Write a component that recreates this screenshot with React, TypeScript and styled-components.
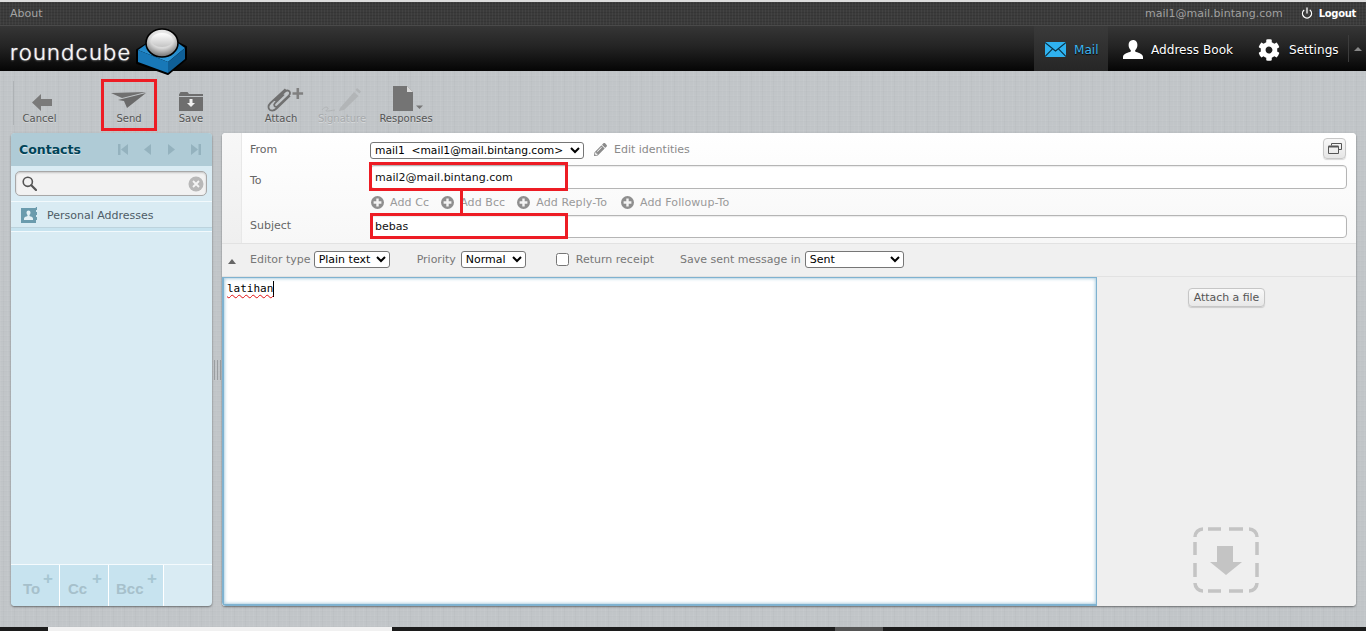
import styled, { createGlobalStyle } from "styled-components";
import { FaCog, FaPencilAlt } from "react-icons/fa";
import { Power } from "lucide-react";

const GlobalStyle = createGlobalStyle`
  html, body { margin: 0; padding: 0; height: 100%; overflow: hidden; }
  body { font-family: "DejaVu Sans", Verdana, sans-serif; font-size: 11px; color: #333; }
  * { box-sizing: border-box; }
`;

const linen = `
  repeating-linear-gradient(90deg, rgba(255,255,255,.05) 0 1px, transparent 1px 3px, rgba(0,0,0,.02) 3px 4px, transparent 4px 7px, rgba(255,255,255,.03) 7px 8px, transparent 8px 11px),
  repeating-linear-gradient(0deg, rgba(255,255,255,.03) 0 1px, transparent 1px 4px, rgba(0,0,0,.012) 4px 5px)
`;

const Page = styled.div`
  width: 1366px; height: 631px; display: flex; flex-direction: column; overflow: hidden;
  background-color: #c1c5c8; background-image: ${linen};
  border-top: 2px solid #dcdcdc;
`;

/* top line */
const TopLine = styled.div`
  height: 23px; flex: none; display: flex; align-items: center; justify-content: space-between;
  padding: 0 10px;
  background-color: #3b3b3b;
  background-image: repeating-linear-gradient(90deg, rgba(255,255,255,.04) 0 1px, transparent 1px 3px),
    repeating-linear-gradient(0deg, rgba(0,0,0,.1) 0 1px, transparent 1px 3px);
`;
const About = styled.span` color: #a3a3a3; font-size: 11px; `;
const UserBox = styled.div` display: flex; align-items: center; `;
const UserMail = styled.span` color: #a0a0a0; font-size: 11px; margin-right: 18px; `;
const Logout = styled.span`
  display: flex; align-items: center; gap: 6px;
  color: #fff; font-size: 10px; font-weight: 700; letter-spacing: -0.3px;
  svg { margin-top: -1px; }
`;

/* logo + tasks */
const NavBar = styled.div`
  height: 46px; flex: none; display: flex; justify-content: space-between; position: relative; z-index: 2;
  background: linear-gradient(180deg, #363636 0%, #242424 45%, #050505 100%);
  border-top: 1px solid #4a4a4a;
`;
const Logo = styled.div` display: flex; align-items: flex-start; padding-left: 10px; `;
const LogoText = styled.span`
  width: 121px; font-family: Inter, Lato, sans-serif; font-weight: 300; font-size: 22px; line-height: 30px;
  letter-spacing: 1.15px; color: #f6f6f6; margin-top: 11px; white-space: nowrap;
  text-shadow: 0 0 1px rgba(255,255,255,.7), 0 1px 2px rgba(255,255,255,.3);
`;
const LogoCube = styled.svg` width: 52px; height: 48px; margin: 2px 0 0 5px; flex: none; overflow: visible; `;
const Tasks = styled.nav` display: flex; align-items: stretch; `;
const Task = styled.a<{ $active?: boolean; $w: number; $gap: number; $pl: number }>`
  width: ${(p) => p.$w}px; display: flex; align-items: center; gap: ${(p) => p.$gap}px;
  padding: 2px 0 0 ${(p) => p.$pl}px;
  font-size: 12.1px; text-shadow: 0 1px 1px #000;
  color: ${(p) => (p.$active ? "#3cb4ee" : "#fff")};
  background: ${(p) => (p.$active ? "linear-gradient(180deg,#3a3a3a,#262626)" : "transparent")};
`;
const TaskToggle = styled.div`
  width: 18px; display: flex; align-items: center; justify-content: center; position: relative;
  &::before { content: ""; position: absolute; left: 0; top: 9px; bottom: 9px; width: 1px; background: #3c3c3c; }
  &::after { content: ""; border: 4px solid transparent; border-top: 0; border-bottom: 4px solid #888; margin-left: 1px; }
`;

/* toolbar */
const Toolbar = styled.div` height: 61px; flex: none; display: flex; padding: 10px 0 0 13px; position: relative; `;
const ToolButton = styled.a<{ $ml?: number; $off?: boolean; $sep?: boolean }>`
  width: 52px; height: 44px; margin-left: ${(p) => p.$ml ?? 0}px; flex: none;
  display: flex; flex-direction: column; align-items: center; justify-content: flex-end;
  font-size: 10px; line-height: 12px; white-space: nowrap;
  color: ${(p) => (p.$off ? "#a8abad" : "#555")};
  text-shadow: 0 1px 0 rgba(255,255,255,.35);
  border-left: ${(p) => (p.$sep ? "1px solid #aeb2b5" : "0")};
  svg { flex: none; margin-bottom: 2px; overflow: visible; }
`;

/* content */
const Content = styled.div`
  flex: 1; min-height: 0; margin: 1px 10px 21px 11px; display: flex; position: relative;
`;

const Sidebar = styled.aside`
  width: 201px; flex: none; display: flex; flex-direction: column; overflow: hidden;
  border-radius: 4px; background: #d9ebf3; box-shadow: 0 1px 2px rgba(0,0,0,.45);
`;
const SideHead = styled.div`
  height: 33px; flex: none; display: flex; align-items: center; justify-content: space-between; padding: 0 11px 0 8px;
  background: #afcbd6;
`;
const SideTitle = styled.h2`
  margin: 0; font-size: 12.5px; font-weight: 700; color: #004458; text-shadow: 0 1px 1px rgba(255,255,255,.6);
`;
const Pager = styled.div` display: flex; align-items: center; gap: 13px; svg { display: block; } `;
const SearchRow = styled.div` height: 35px; flex: none; padding: 5px 5px 0 4px; `;
const SearchBox = styled.div`
  height: 25px; display: flex; align-items: center; justify-content: space-between; padding: 0 2px 0 6px;
  background: #f2f2f2; border: 1px solid #a8a8a8; border-radius: 5px; box-shadow: inset 0 1px 2px rgba(0,0,0,.18);
`;
const GroupRow = styled.div`
  height: 26px; flex: none; display: flex; align-items: center; gap: 10px; padding: 2px 0 0 10px;
  font-size: 11px; color: #4e5c66; border-top: 1px solid #f2f9fc;
`;
const GroupRowEnd = styled.div`
  height: 5px; flex: none; background: #c7e3ef; border-top: 1px solid #bcd3dd; border-bottom: 1px solid #f2f9fc;
`;
const SideFill = styled.div` flex: 1; `;
const AddBar = styled.div` height: 42px; flex: none; display: flex; border-top: 1px solid #f4fafd; `;
const AddButton = styled.a<{ $w: number; $pl: number }>`
  width: ${(p) => p.$w}px; position: relative; display: flex; align-items: center; padding: 6px 0 0 ${(p) => p.$pl}px;
  background: #c7e3ef; border-right: 1px solid #fff;
  font-family: "Liberation Sans", Arial, sans-serif; font-weight: 700; font-size: 15px; color: #a6c0cb;
  &::after { content: "+"; position: absolute; top: 5px; right: 6px; font-size: 17px; line-height: 18px; color: #a6c6d2; }
`;

const Splitter = styled.div`
  width: 10px; flex: none; display: flex; align-items: center; justify-content: center;
  &::after { content: ""; width: 5px; height: 20px; border-left: 1px solid #9a9ea1; border-right: 1px solid #9a9ea1; background: linear-gradient(90deg, transparent 2px, #9a9ea1 2px, #9a9ea1 3px, transparent 3px); }
`;

const Main = styled.main`
  flex: 1; min-width: 0; display: flex; flex-direction: column; overflow: hidden;
  border-radius: 4px; background: #fff; box-shadow: 0 1px 2px rgba(0,0,0,.45);
`;
const Headers = styled.div` height: 110px; flex: none; display: flex; background: linear-gradient(180deg, #fff, #f7f7f7); `;
const HeaderStrip = styled.div` width: 20px; flex: none; background: linear-gradient(180deg, #f7f7f7, #efefef); border-right: 1px solid #e8e8e8; `;
const HeaderGrid = styled.div`
  flex: 1; display: grid; grid-template-columns: 120px 1fr 9px; padding-left: 8px;
  grid-template-rows: 30px 28px 22px 26px; align-items: center;
`;
const FieldLabel = styled.label<{ $mt: number }>` color: #666; font-size: 11px; margin-top: ${(p) => p.$mt}px; `;
const FromCell = styled.div` display: flex; align-items: center; justify-content: space-between; padding-top: 4px; `;
const FromLeft = styled.div` display: flex; align-items: center; gap: 10px; `;
const EditLink = styled.a`
  display: flex; align-items: center; gap: 7px; color: #8a8a8a; font-size: 11px; margin-top: -2px;
`;
const NativeSelect = styled.select<{ $w: number }>`
  width: ${(p) => p.$w}px; height: 17px; padding: 0; background: #fff; color: #000;
  border: 1px solid #767676; border-radius: 3px; font-family: inherit; font-size: 11px;
`;
const FromSelect = styled(NativeSelect)` font-size: 10.7px; `;
const ToggleHeaders = styled.a`
  width: 23px; height: 21px; margin-right: 1px; margin-top: -4px; display: flex; align-items: center; justify-content: center;
  background: linear-gradient(180deg, #f8f8f8, #e6e6e6); border: 1px solid #c8c8c8; border-radius: 4px;
  box-shadow: 0 1px 1px rgba(0,0,0,.15);
`;
const TextField = styled.input<{ $h: number }>`
  width: 100%; height: ${(p) => p.$h}px; padding: 0 4px; background: #fff; color: #111;
  border: 1px solid #b5b5b5; border-radius: 4px; box-shadow: inset 0 1px 1px rgba(0,0,0,.08);
  font-family: inherit; font-size: 11px;
`;
const AddLinks = styled.div` display: flex; align-items: center; `;
const AddLink = styled.a<{ $ml?: number }>`
  display: flex; align-items: center; gap: 6px; margin-left: ${(p) => p.$ml ?? 0}px; color: #999; font-size: 11px; white-space: nowrap;
  padding-left: 1px; letter-spacing: 0.1px;
`;
const OptionsRow = styled.div`
  height: 34px; flex: none; display: flex; align-items: center; position: relative;
  padding: 0 0 2px 28px; color: #777; font-size: 11px;
  background: #f0f0f0; border-top: 1px solid #e2e2e2; border-bottom: 1px solid #e2e2e2;
`;
const CollapseArrow = styled.span`
  position: absolute; left: 6px; top: 15px; width: 0; height: 0;
  border: 4.5px solid transparent; border-top: 0; border-bottom: 5px solid #666;
`;
const OptionGroup = styled.span<{ $ml?: number; $gap: number }>`
  display: flex; align-items: center; gap: ${(p) => p.$gap}px; margin-left: ${(p) => p.$ml ?? 0}px; white-space: nowrap;
`;
const Receipt = styled.input`
  width: 13px; height: 13px; margin: 0; accent-color: #666;
`;

const ComposeArea = styled.div` flex: 1; min-height: 0; display: flex; background: #efefef; `;
const EditorWrap = styled.div`
  width: 875px; flex: none; padding: 3px 3px 3px 3px; background: #fff;
  border: 1px solid #7fb2d0; border-left-width: 2px; border-bottom-width: 2px;
  box-shadow: inset 0 0 3px 1px rgba(113,169,200,.55);
  font-family: "DejaVu Sans Mono", "Liberation Mono", monospace; font-size: 11px; line-height: 16px; color: #000;
`;
const Typed = styled.span`
  display: inline-block; border-right: 1px solid #000;
  text-decoration: underline wavy #e01010 1px; text-underline-offset: 2px;
`;
const AttachPane = styled.div`
  flex: 1; display: flex; flex-direction: column; align-items: center; padding: 11px 0 13px 0; justify-content: space-between;
`;
const AttachButton = styled.a`
  height: 19px; padding: 0 5px; display: flex; align-items: center; color: #555; font-size: 10.9px;
  background: linear-gradient(180deg, #f9f9f9, #e8e8e8); border: 1px solid #c6c6c6; border-radius: 4px;
  box-shadow: 0 1px 1px rgba(0,0,0,.15);
`;
const DropIcon = styled.svg` width: 66px; height: 66px; flex: none; margin-right: 1px; `;

/* the marks somebody drew on the screenshot */
const Mark = styled.div<{ $l: number; $t: number; $w: number; $h: number }>`
  position: absolute; z-index: 5; pointer-events: none;
  left: ${(p) => p.$l}px; top: ${(p) => p.$t}px; width: ${(p) => p.$w}px; height: ${(p) => p.$h}px;
  border: 3px solid #ed1c24;
`;
const MarkLine = styled.div`
  position: absolute; z-index: 5; left: 460px; top: 190px; width: 3px; height: 24px; background: #ed1c24;
`;

/* cut-off taskbar at the very bottom */
const BottomStrip = styled.div`
  height: 4px; flex: none; display: flex; background: #1c1c1c; padding-left: 48px;
`;
const StripTab = styled.div<{ $w: number; $ml?: number; $c: string }>`
  width: ${(p) => p.$w}px; margin-left: ${(p) => p.$ml ?? 0}px; background: ${(p) => p.$c};
`;

const PlusCircle = () => (
  <svg width="13" height="13" viewBox="0 0 13 13">
    <circle cx="6.5" cy="6.5" r="6.5" fill="#8f8f8f" />
    <path d="M5.3 2.6h2.4v2.7h2.7v2.4H7.7v2.7H5.3V7.7H2.6V5.3h2.7z" fill="#f4f4f4" />
  </svg>
);

const PagerIcon = ({ d }: { d: string }) => (
  <svg width="11" height="11" viewBox="0 0 11 11"><path d={d} fill="#94b2be" /></svg>
);

export default function App() {
  return (
    <Page>
      <GlobalStyle />
      <TopLine>
        <About>About</About>
        <UserBox>
          <UserMail>mail1@mail.bintang.com</UserMail>
          <Logout><Power size={12} strokeWidth={2.6} />Logout</Logout>
        </UserBox>
      </TopLine>

      <NavBar>
        <Logo>
          <LogoText>roundcube</LogoText>
          <LogoCube viewBox="0 0 52 48">
            <defs>
              <radialGradient id="ball" cx="50%" cy="30%" r="70%">
                <stop offset="0" stopColor="#f8f8f8" />
                <stop offset=".55" stopColor="#d8d8d8" />
                <stop offset="1" stopColor="#6f6f6f" />
              </radialGradient>
              <linearGradient id="cubeTop" x1="0" y1="0" x2="0" y2="1">
                <stop offset="0" stopColor="#1c7fc0" />
                <stop offset="1" stopColor="#2f9bdc" />
              </linearGradient>
              <linearGradient id="dent" x1="0" y1="0" x2="0" y2="1">
                <stop offset="0" stopColor="#ffffff" />
                <stop offset="1" stopColor="#c4c4c4" />
              </linearGradient>
            </defs>
            <path d="M1 22 L12 15 L42 15 L50 19 L32 35 L32 46 L1 35 Z M50 19 L50 31 L32 46 L32 35 Z" fill="#000" stroke="#000" strokeWidth="2" strokeLinejoin="round" />
            <path d="M2 22 L12 15 L42 15 L49 20 L32 34 Z" fill="url(#cubeTop)" />
            <path d="M2 22 L32 34 L32 45 L2 34 Z" fill="#1878b8" />
            <path d="M32 34 L49 20 L49 31 L32 45 Z" fill="#0f5f97" />
            <ellipse cx="26" cy="15" rx="16" ry="14" fill="url(#ball)" stroke="#000" strokeWidth="1.6" />
            <ellipse cx="26" cy="12" rx="11" ry="7" fill="url(#dent)" />
          </LogoCube>
        </Logo>
        <Tasks>
          <Task $active $w={74} $gap={8} $pl={11}>
            <svg width="21" height="15" viewBox="0 0 21 15">
              <rect width="21" height="15" fill="#2fb2f0" />
              <path d="M0 .5 10.5 9 21 .5M0 14.5 7.5 6.8M21 14.5 13.5 6.8" fill="none" stroke="#0a3144" strokeWidth="1.1" />
            </svg>
            Mail
          </Task>
          <Task $w={135} $gap={8} $pl={15}>
            <svg width="20" height="19" viewBox="0 0 20 19">
              <path d="M10 0c3 0 4.400 2.200 4.400 5 0 2.300-1 4.200-2.200 5.200v1.300c1.800 1 7.800 2 7.800 5.500v2H0v-2c0-3.500 6-4.500 7.800-5.500v-1.300C6.600 9.200 5.600 7.300 5.600 5 5.600 2.200 7 0 10 0z" fill="#fff" />
            </svg>
            Address Book
          </Task>
          <Task $w={105} $gap={9} $pl={15}>
            <FaCog size={22} />
            Settings
          </Task>
          <TaskToggle />
        </Tasks>
      </NavBar>

      <Toolbar>
        <ToolButton $sep>
          <svg width="24" height="17" viewBox="-4 0 24 17">
            <path d="M0 8.500 9 0v5h11v7H9v5z" fill="#7a7a7a" />
          </svg>
          Cancel
        </ToolButton>
        <ToolButton $ml={38}>
          <svg width="36" height="19" viewBox="0 0 36 19">
            <path d="M0 1 35 0 11 6z" fill="#707070" />
            <path d="M7 8 35 1 16 16 13 9z" fill="#6a6a6a" />
          </svg>
          Send
        </ToolButton>
        <ToolButton $ml={10}>
          <svg width="24" height="19" viewBox="0 0 24 19">
            <path d="M0 2.500 1.500 0h7L10 2h14v2H0z" fill="#6e6e6e" />
            <path d="M0 5h24v14H0z" fill="#6e6e6e" />
            <path d="M10.500 7h3v4h2.500l-4 4-4-4h2.500z" fill="#f0f0f0" />
          </svg>
          Save
        </ToolButton>
        <ToolButton $ml={38}>
          <svg width="42" height="23" viewBox="-7 0 42 23">
            <path d="M8 13 18 3.500c2-1.800 4.800-1 5 1.300.1 1-.4 2-1.200 2.800L11 18c-1.300 1.200-3 1-3.600-.1-.5-.9-.2-2 .6-2.800l9-8.700M18.500 1.200 3.500 15c-2.800 2.800-2.500 5.800-.5 7 2 1 4.500.5 6.500-1.500L23 7.500" fill="none" stroke="#707070" strokeWidth="1.800" />
            <path d="M29.500 0h2.600v4.200h4v2.600h-4V11h-2.600V6.800h-4V4.200h4z" fill="#808080" />
          </svg>
          Attach
        </ToolButton>
        <ToolButton $ml={9} $off>
          <svg width="42" height="24" viewBox="0 0 42 24">
            <path d="M19 21 33 5l4.500 4L23 23l-5 1z" fill="#b2b5b7" />
            <path d="M34.500 3l1.500-2 4 3.500-1.500 2z" fill="#b2b5b7" />
            <path d="M1 23c2-3 5-3.500 6-2 .8 1.300-3 2.500-2 3 2 .5 6-.8 9-1" fill="none" stroke="#b2b5b7" strokeWidth="1" />
          </svg>
          Signature
        </ToolButton>
        <ToolButton $ml={12}>
          <svg width="34" height="25" viewBox="1 0 34 25">
            <path d="M5 0h14l6 6v19H5z" fill="#747474" />
            <path d="M19 0l6 6h-6z" fill="#dadada" />
            <path d="M28 19.500h7l-3.500 3.500z" fill="#777" />
          </svg>
          Responses
        </ToolButton>
      </Toolbar>

      <Content>
        <Sidebar>
          <SideHead>
            <SideTitle>Contacts</SideTitle>
            <Pager>
              <PagerIcon d="M0 0h2.500v11H0zM10 0v11L3 5.500z" />
              <PagerIcon d="M9 0v11L2 5.500z" />
              <PagerIcon d="M2 0v11l7-5.500z" />
              <PagerIcon d="M11 0H8.500v11H11zM1 0v11l7-5.500z" />
            </Pager>
          </SideHead>
          <SearchRow>
            <SearchBox>
              <svg width="15" height="15" viewBox="0 0 15 15">
                <circle cx="5.800" cy="5.800" r="4.600" fill="none" stroke="#555" strokeWidth="1.600" />
                <path d="M9.300 9.300 14 14" stroke="#555" strokeWidth="2.200" strokeLinecap="round" />
              </svg>
              <svg width="16" height="16" viewBox="0 0 16 16">
                <circle cx="8" cy="8" r="7.500" fill="#b8b8b8" />
                <path d="M5 5l6 6M11 5l-6 6" stroke="#f4f4f4" strokeWidth="1.800" />
              </svg>
            </SearchBox>
          </SearchRow>
          <GroupRow>
            <svg width="16" height="18" viewBox="0 0 16 18">
              <rect x="0" y="1" width="15" height="15" fill="#6b9bad" />
              <path d="M7.500 3.500c1.500 0 2 1 2 2.300 0 1-.4 1.800-1 2.300v1c1 .5 3.500 1 3.500 2.400V13H3v-1.500c0-1.400 2.500-1.900 3.500-2.400v-1c-.6-.5-1-1.300-1-2.300 0-1.300.5-2.300 2-2.300z" fill="#e4f0f5" />
              <path d="M15.500 0v3M15.500 5v3M15.500 10v3" stroke="#6b9bad" strokeWidth="1.400" />
            </svg>
            Personal Addresses
          </GroupRow>
          <GroupRowEnd />
          <SideFill />
          <AddBar>
            <AddButton $w={49} $pl={12}>To</AddButton>
            <AddButton $w={49} $pl={8}>Cc</AddButton>
            <AddButton $w={55} $pl={7}>Bcc</AddButton>
          </AddBar>
        </Sidebar>

        <Splitter />

        <Main>
          <Headers>
            <HeaderStrip />
            <HeaderGrid>
              <FieldLabel $mt={2}>From</FieldLabel>
              <FromCell>
                <FromLeft>
                  <FromSelect $w={214} defaultValue="m1">
                    <option value="m1">mail1&nbsp;&nbsp;&lt;mail1@mail.bintang.com&gt;</option>
                  </FromSelect>
                  <EditLink><FaPencilAlt size={13} color="#8c8c8c" />Edit identities</EditLink>
                </FromLeft>
                <ToggleHeaders>
                  <svg width="14" height="11" viewBox="0 0 14 11">
                    <path d="M3.500 2.500V.5h10v6h-3" fill="none" stroke="#555" />
                    <path d="M.5 3.500h10v7H.5z" fill="none" stroke="#555" />
                    <path d="M.5 3.500h10" stroke="#555" strokeWidth="2" />
                  </svg>
                </ToggleHeaders>
              </FromCell>
              <span />
              <FieldLabel $mt={6}>To</FieldLabel>
              <TextField $h={24} defaultValue="mail2@mail.bintang.com" spellCheck={false} />
              <span />
              <span />
              <AddLinks>
                <AddLink><PlusCircle />Add Cc</AddLink>
                <AddLink $ml={11}><PlusCircle />Add Bcc</AddLink>
                <AddLink $ml={11}><PlusCircle />Add Reply-To</AddLink>
                <AddLink $ml={13}><PlusCircle />Add Followup-To</AddLink>
              </AddLinks>
              <span />
              <FieldLabel $mt={-1}>Subject</FieldLabel>
              <TextField $h={23} defaultValue="bebas" spellCheck={false} />
              <span />
            </HeaderGrid>
          </Headers>

          <OptionsRow>
            <CollapseArrow />
            <OptionGroup $gap={3}>Editor type
              <NativeSelect $w={76} defaultValue="p"><option value="p">Plain text</option></NativeSelect>
            </OptionGroup>
            <OptionGroup $ml={27} $gap={5}>Priority
              <NativeSelect $w={65} defaultValue="n"><option value="n">Normal</option></NativeSelect>
            </OptionGroup>
            <OptionGroup $ml={30} $gap={7}><Receipt type="checkbox" />Return receipt</OptionGroup>
            <OptionGroup $ml={26} $gap={4}>Save sent message in
              <NativeSelect $w={99} defaultValue="s"><option value="s">Sent</option></NativeSelect>
            </OptionGroup>
          </OptionsRow>

          <ComposeArea>
            <EditorWrap><Typed>latihan</Typed></EditorWrap>
            <AttachPane>
              <AttachButton>Attach a file</AttachButton>
              <DropIcon viewBox="0 0 66 66">
                <g fill="none" stroke="#c4c4c4" strokeWidth="3.500">
                  <path d="M2 10a8 8 0 0 1 8-8M56 2a8 8 0 0 1 8 8M64 56a8 8 0 0 1-8 8M10 64a8 8 0 0 1-8-8" />
                  <path d="M15 2h13M36 2h14M15 64h13M36 64h14M2 15v13M2 36v14M64 15v13M64 36v14" />
                </g>
                <path d="M24 19h16v16h9L33 48 17 35h7z" fill="#c4c4c4" />
              </DropIcon>
            </AttachPane>
          </ComposeArea>
        </Main>
      </Content>

      <BottomStrip>
        <StripTab $w={344} $c="#f1f1f1" />
        <StripTab $w={48} $ml={443} $c="#555" />
      </BottomStrip>

      <Mark $l={101} $t={79} $w={56} $h={52} />
      <Mark $l={369} $t={162} $w={199} $h={29} />
      <MarkLine />
      <Mark $l={370} $t={213} $w={198} $h={26} />
    </Page>
  );
}
